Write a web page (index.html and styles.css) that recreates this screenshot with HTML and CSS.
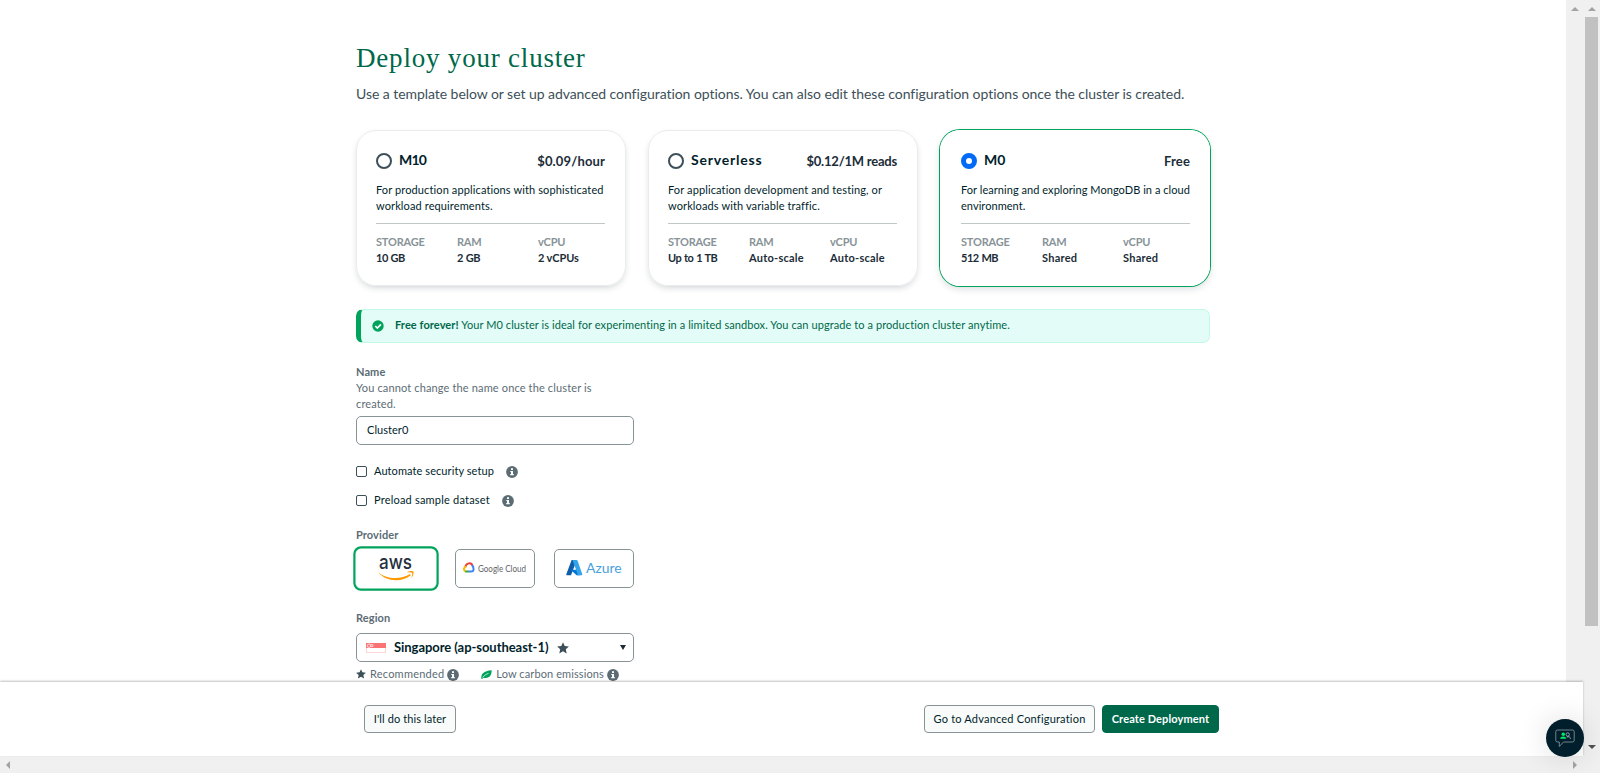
FILE: index.html
```html
<!DOCTYPE html>
<html lang="en">
<head>
<meta charset="utf-8">
<title>Deploy your cluster</title>
<link rel="stylesheet" href="styles.css">
</head>
<body>
<svg class="defs" width="0" height="0" aria-hidden="true">
  <symbol id="info" viewBox="0 0 12 12"><circle cx="6" cy="6" r="5.9" fill="#5c6c75"/><path d="M5 2.200h2v1.700H5zM4.300 4.900H7v3.200h.8v1.200H4.200V8.100h.8V6h-.7z" fill="#fff"/></symbol>
  <symbol id="star" viewBox="0 0 12 12"><path d="M6 .2l1.700 3.800 4.200.4-3.100 2.800.9 4.300L6 9.300l-3.700 2.200.9-4.300L.1 4.400l4.200-.4z" fill="#3d4f58"/></symbol>
</svg>
<div class="window">
  <div class="pane">
    <div class="viewport">
      <main class="content">
        <h1 class="title">Deploy your cluster</h1>
        <p class="subtitle">Use a template below or set up advanced configuration options. You can also edit these configuration options once the cluster is created.</p>

        <section class="cards">
          <article class="card">
            <header class="card-head"><span class="radio"></span><h2 class="card-name short">M10</h2><span class="price">$0.09/hour</span></header>
            <p class="card-desc">For production applications with sophisticated<br>workload requirements.</p>
            <dl class="specs">
              <div><dt>STORAGE</dt><dd class="tight">10 GB</dd></div>
              <div><dt>RAM</dt><dd class="tight">2 GB</dd></div>
              <div><dt>vCPU</dt><dd>2 vCPUs</dd></div>
            </dl>
          </article>
          <article class="card">
            <header class="card-head"><span class="radio"></span><h2 class="card-name">Serverless</h2><span class="price narrow">$0.12/1M reads</span></header>
            <p class="card-desc">For application development and testing, or<br>workloads with variable traffic.</p>
            <dl class="specs">
              <div><dt>STORAGE</dt><dd class="tight">Up to 1 TB</dd></div>
              <div><dt>RAM</dt><dd class="wide">Auto-scale</dd></div>
              <div><dt>vCPU</dt><dd class="wide">Auto-scale</dd></div>
            </dl>
          </article>
          <article class="card selected">
            <header class="card-head"><span class="radio checked"></span><h2 class="card-name short">M0</h2><span class="price">Free</span></header>
            <p class="card-desc">For learning and exploring MongoDB in a cloud<br>environment.</p>
            <dl class="specs">
              <div><dt>STORAGE</dt><dd class="tight">512 MB</dd></div>
              <div><dt>RAM</dt><dd class="wide">Shared</dd></div>
              <div><dt>vCPU</dt><dd class="wide">Shared</dd></div>
            </dl>
          </article>
        </section>

        <div class="banner">
          <svg class="banner-icon" viewBox="0 0 12 12"><circle cx="6" cy="6" r="5.700" fill="#00a35c"/><path d="M3.300 6l2 2L8.900 4.300" fill="none" stroke="#fff" stroke-width="1.700"/></svg>
          <p class="banner-text"><b>Free forever!</b> Your M0 cluster is ideal for experimenting in a limited sandbox. You can upgrade to a production cluster anytime.</p>
        </div>

        <form class="form">
          <div class="label">Name</div>
          <div class="hint">You cannot change the name once the cluster is<br>created.</div>
          <div class="input">Cluster0</div>
          <div class="check check-first"><span class="box"></span><span class="check-text auto">Automate security setup</span><svg class="info"><use href="#info"/></svg></div>
          <div class="check"><span class="box"></span><span class="check-text preload">Preload sample dataset</span><svg class="info"><use href="#info"/></svg></div>

          <div class="label provider-label">Provider</div>
          <div class="providers">
            <div class="provider active">
              <svg class="aws-logo" viewBox="0 0 36 34">
                <text x="1" y="17" class="aws-text" textLength="33" lengthAdjust="spacingAndGlyphs">aws</text>
                <path d="M0 20.300c8 6.700 22 8 32 1.800l.8 1.100C23 31.500 7 29 0 20.300z" fill="#f90"/>
                <path d="M28.500 20.300c3-1.600 6-1.500 7-.8.4 2.200-.7 5-2.300 6.600 1-2.700 1.400-4.300.9-5.100-.8-.6-3-.6-5.600-.7z" fill="#f90"/>
              </svg>
            </div>
            <div class="provider">
              <svg width="64" height="14" viewBox="0 0 64 14">
                <path d="M2.300 5C3 .8 8.400 0 9.500 3.600" fill="none" stroke="#ea4335" stroke-width="2"/>
                <path d="M8.900 3.100c1.300.8 1.300 1.500 1.400 2.500" fill="none" stroke="#4285f4" stroke-width="2"/>
                <path d="M3 9.600C.3 9 .2 5.200 3.200 4.800" fill="none" stroke="#fbbc04" stroke-width="2"/>
                <path d="M2.300 9.500h3.700" fill="none" stroke="#34a853" stroke-width="2"/>
                <path d="M5.800 9.500h2.600c2.500 0 2.900-3.300 1.200-4.300" fill="none" stroke="#4285f4" stroke-width="2"/>
                <text x="15" y="9.500" class="google-text" textLength="48" lengthAdjust="spacingAndGlyphs">Google Cloud</text>
              </svg>
            </div>
            <div class="provider">
              <svg class="azure-logo" width="56" height="18" viewBox="0 0 56 18">
                <path d="M5.600 1h5.200L5 16.200H1.200C.5 16.200.1 15.600.4 14.900z" fill="#0f5ca8"/>
                <path d="M4.500 10.700h7.700l2 5.500h-3.600z" fill="#0078d4"/>
                <path d="M6.500 1h4.100c.5 0 .8.300 1 .8l4.600 13.100c.2.700-.2 1.300-.9 1.300h-4.600c.7 0 1.100-.6.900-1.200z" fill="#34a4ea"/>
                <text x="20" y="13.500" class="azure-text" textLength="35.500" lengthAdjust="spacingAndGlyphs">Azure</text>
              </svg>
            </div>
          </div>

          <div class="label region-label">Region</div>
          <div class="select">
            <svg class="flag" viewBox="0 0 20 10"><path d="M.3.300h19.400v9.400H.3z" fill="#fff" stroke="#f9b9b9" stroke-width=".7"/><path d="M0 0h20v5H0z" fill="#fb7373"/><circle cx="3" cy="2.700" r="1.700" fill="none" stroke="#fff" stroke-width=".7"/><path d="M5 1.600h2v2H5z" fill="none" stroke="#fff" stroke-width=".6"/></svg>
            <span class="region">Singapore (ap-southeast-1)</span>
            <svg class="region-star"><use href="#star"/></svg>
            <span class="caret"></span>
          </div>
          <div class="legend">
            <svg class="legend-star"><use href="#star"/></svg><span class="legend-text recommended">Recommended</span><svg class="info"><use href="#info"/></svg>
            <svg class="leaf" viewBox="0 0 11 9"><path d="M.3 8.700C0 4 2.500 1 10.700.3 10.600 5.700 8.300 8.800 2.800 7.700L1.400 8.700z" fill="#00a35c"/><path d="M1.500 7.600C3.300 5.200 5 4.300 7.500 3.400" stroke="#fff" stroke-width=".7" fill="none"/></svg><span class="legend-text carbon">Low carbon emissions</span><svg class="info"><use href="#info"/></svg>
          </div>
        </form>
      </main>
      <div class="inner-scroll"><i class="arrow up"></i></div>
    </div>
    <footer class="footer">
      <button class="btn later">I'll do this later</button>
      <button class="btn advanced">Go to Advanced Configuration</button>
      <button class="btn primary">Create Deployment</button>
    </footer>
  </div>
  <div class="vscroll"><i class="arrow up"></i><i class="thumb"></i><i class="arrow down"></i></div>
  <div class="hscroll"><i class="arrow left"></i><i class="arrow right"></i></div>
  <div class="corner"></div>
</div>
<div class="chat">
  <svg width="20" height="19" viewBox="0 0 20 19">
    <path d="M2.500 1h15a1.700 1.700 0 0 1 1.700 1.700v8.600a1.700 1.700 0 0 1-1.700 1.700H8.500L4.300 17.500V13H2.500A1.700 1.700 0 0 1 .8 11.300V2.700A1.700 1.700 0 0 1 2.500 1z" fill="none" stroke="#9fb0b5" stroke-width=".7"/>
    <circle cx="8.300" cy="5.300" r="1.700" fill="#00ed64"/><path d="M5.200 9.700c0-3 6-3 6 0z" fill="#00ed64"/>
    <circle cx="12.700" cy="5.500" r="1.700" fill="none" stroke="#c1ccd0" stroke-width=".7"/><path d="M11.800 8c2-.8 3.600 0 3.700 1.800" fill="none" stroke="#c1ccd0" stroke-width=".8"/>
  </svg>
</div>
</body>
</html>
```
FILE: styles.css
```css
* { box-sizing: border-box; }
body { margin: 0; background: #fff; color: #001e2b; font: 11px/16px Lato, "Open Sans", sans-serif; overflow: hidden; }
h1, h2, p, dl, dd { margin: 0; }
.defs { position: absolute; }
svg { display: block; flex: none; }
.window { display: grid; grid-template-columns: 1583px 17px; grid-template-rows: 756px 17px; }
.pane { display: flex; flex-direction: column; }
.viewport { display: flex; height: 682px; overflow: hidden; }
.content { width: 1566px; height: 682px; padding: 41px 0 0 356px; overflow: hidden; }
.inner-scroll { width: 17px; background: #f0f0f0; }

.title { width: 600px; font: 400 27px/34px "Liberation Serif", serif; color: #00684a; letter-spacing: 0.8px; white-space: nowrap; }
.subtitle { margin-top: 9px; font-size: 14px; line-height: 20px; color: #3d4f58; white-space: nowrap; letter-spacing: -0.053px; }

.cards { display: grid; grid-template-columns: repeat(3, 270px); gap: 22px; margin-top: 26px; }
.card { height: 156px; border: 1px solid #e8edeb; border-radius: 20px; padding: 18px 20px 18px 19px; box-shadow: 0 3px 7px -2px rgba(0, 30, 43, .22); }
.card.selected { border-color: #fff; padding: 18px 19px 18px 20px; box-shadow: 0 0 0 1px #00a35c, 0 3px 7px rgba(0, 30, 43, .15); }
.card-head { display: flex; align-items: center; height: 24px; }
.radio { width: 16px; height: 16px; border: 2px solid #3d4f58; border-radius: 50%; margin-right: 7px; }
.radio.checked { border: 5px solid #016bf8; }
.card-name { font-size: 14px; line-height: 18px; font-weight: 700; padding-bottom: 2px; letter-spacing: 0.8px; }
.card-name.short { letter-spacing: -0.8px; }
.selected .card-name.short { letter-spacing: 0; }
.price { margin-left: auto; font-size: 13px; font-weight: 700; color: #1c2d38; letter-spacing: 0.15px; }
.price.narrow { letter-spacing: -0.22px; }
.card-desc { margin-top: 9px; height: 42px; border-bottom: 1px solid #c1c7c6; white-space: nowrap; letter-spacing: 0.12px; }
.selected .card-desc { letter-spacing: 0.05px; }
.specs { display: grid; grid-template-columns: 81px 81px 67px; margin-top: 10px; }
.specs dt { font-weight: 700; color: #889397; letter-spacing: -0.2px; }
.specs dd { font-weight: 700; color: #1c2d38; white-space: nowrap; letter-spacing: -0.1px; }
.specs .tight { letter-spacing: -0.5px; word-spacing: 0.6px; }
.specs .wide { letter-spacing: 0.24px; }

.banner { display: flex; align-items: center; width: 854px; height: 34px; margin-top: 23px; border: 1px solid #c0fae6; border-left: 5px solid #00a35c; border-radius: 7px; background: #e3fcf7; padding-left: 11px; }
.banner-icon { width: 12px; height: 12px; margin-right: 11px; }
.banner-text { color: #00684a; letter-spacing: 0.08px; white-space: nowrap; padding-bottom: 2px; }

.form { width: 278px; margin-top: 21px; }
.label { font-weight: 700; color: #5c6c75; letter-spacing: 0.1px; }
.hint { color: #5c6c75; letter-spacing: 0.14px; white-space: nowrap; }
.input { height: 29px; margin-top: 4px; padding: 5px 10px; border: 1px solid #889397; border-radius: 5px; letter-spacing: .05px; }
.check { display: flex; align-items: center; height: 16px; margin-top: 13px; }
.check-first { margin-top: 18px; }
.box { width: 11px; height: 11px; border: 1px solid #3d4f58; border-radius: 2px; margin-right: 7px; }
.info { width: 12px; height: 12px; }
.auto { letter-spacing: 0.08px; }
.preload { letter-spacing: 0.2px; }
.check .info { margin: 1px 0 0 12px; }
.provider-label { margin-top: 19px; }
.providers { display: flex; justify-content: space-between; margin-top: 6px; }
.provider { display: flex; align-items: center; justify-content: center; width: 80px; height: 39px; border: 1px solid #889397; border-radius: 5px; }
.provider.active { border-color: #fff; box-shadow: 0 0 0 .5px #fff, 0 0 0 2.700px #00a35c; }
.aws-logo { width: 36px; height: 34px; overflow: visible; }
.aws-text { font: 500 19px/1 Inter, Lato, sans-serif; fill: #252f3e; }
.google-text { font: 400 8.500px Lato, sans-serif; fill: #5f6368; }
.azure-logo { margin-bottom: 2px; }
.azure-text { font: 400 13px Lato, sans-serif; fill: #4a9fdd; }
.region-label { margin-top: 22px; }
.select { display: flex; align-items: center; height: 29px; margin-top: 7px; padding: 0 7px 0 9px; border: 1px solid #889397; border-radius: 5px; }
.flag { width: 20px; height: 10px; margin-right: 8px; }
.region { font-size: 13px; font-weight: 700; white-space: nowrap; letter-spacing: -0.05px; padding-bottom: 1px; }
.region-star { width: 12px; height: 12px; margin-left: 9px; }
.caret { margin-left: auto; border: 3.500px solid transparent; border-top: 5px solid #1c2d38; border-bottom: 0; }
.legend { display: flex; align-items: center; height: 16px; margin-top: 4px; color: #5c6c75; white-space: nowrap; }
.legend-star { width: 10px; height: 10px; margin-right: 4px; }
.recommended { letter-spacing: 0.22px; }
.carbon { letter-spacing: 0.1px; }
.legend .info { margin: 1px 0 0 3px; }
.leaf { width: 11px; height: 9px; margin: 0 4px 0 22px; }

.footer { position: relative; display: flex; align-items: center; height: 74px; padding-left: 364px; background: #fff; box-shadow: 0 -1px 2px rgba(0, 0, 0, .25); }
.btn { height: 28px; padding: 0 0 1px; border: 1px solid #889397; border-radius: 4px; background: #f9fbfa; color: #001e2b; font: 11px/16px Lato, sans-serif; white-space: nowrap; }
.later { width: 92px; letter-spacing: 0.1px; }
.advanced { width: 171px; margin-left: 468px; letter-spacing: 0.2px; }
.primary { width: 117px; margin-left: 7px; border-color: #00684a; background: #00684a; color: #fff; font-weight: 700; letter-spacing: 0.12px; }

.vscroll, .hscroll, .corner { background: #f0f0f0; }
.vscroll { display: flex; flex-direction: column; align-items: center; }
.arrow { display: block; width: 0; height: 0; border: 4px solid transparent; }
.arrow.up { border-top: 0; border-bottom-color: #a3a3a3; margin: 7px auto 0; }
.thumb { width: 13px; height: 609px; margin-top: 6px; background: #c1c1c1; }
.arrow.down { border-bottom: 0; border-top-color: #505050; margin-top: 119px; }
.hscroll { display: flex; align-items: center; justify-content: space-between; padding: 0 6px; }
.arrow.left { border-left: 0; border-right-color: #a3a3a3; }
.arrow.right { border-right: 0; border-left-color: #a3a3a3; }
.chat { position: absolute; left: 1546px; top: 719px; width: 38px; height: 38px; border-radius: 50%; background: #001e2b; display: flex; align-items: center; justify-content: center; box-shadow: 0 0 30px rgba(0, 0, 0, .14); }
```
